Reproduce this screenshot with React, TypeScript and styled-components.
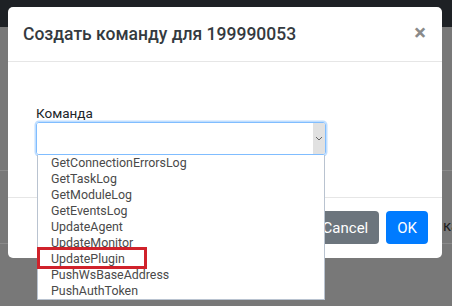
import React from 'react';
import styled, { createGlobalStyle } from 'styled-components';

const GlobalStyle = createGlobalStyle`
  html, body {
    margin: 0;
    padding: 0;
    width: 452px;
    height: 306px;
    overflow: hidden;
    background: #787878;
    font-family: Roboto, "Liberation Sans", sans-serif;
  }
`;

const Page = styled.div`
  position: relative;
  width: 452px;
  height: 306px;
  overflow: hidden;
  background: #787878;
`;

const TopBar = styled.div`
  height: 27px;
  background: #1e2125;
`;

const Table = styled.div`
  display: flex;
  flex-direction: column;
`;

const TableRow = styled.div<{ $height: number }>`
  height: ${(p) => p.$height}px;
  box-sizing: border-box;
  border-bottom: 1px solid #8a8a8a;
  padding: 46px 0 0 443px;
  white-space: nowrap;
  font-size: 15px;
  line-height: 18px;
  color: #1c1c1c;
`;

const Modal = styled.div`
  position: absolute;
  top: 7px;
  left: 8px;
  width: 434px;
  background: #fff;
  border-radius: 5px;
  display: flex;
  flex-direction: column;
`;

const Header = styled.div`
  display: flex;
  align-items: center;
  justify-content: space-between;
  padding: 15px 16px 15px 15px;
  border-bottom: 1px solid #e6e6e6;
`;

const Title = styled.h5`
  margin: 0;
  font-size: 17.5px;
  line-height: 24px;
  font-weight: 500;
  color: #343a40;
`;

const Close = styled.span`
  font-size: 22px;
  line-height: 20px;
  font-weight: 700;
  color: #8a8a8a;
  margin-top: -2px;
`;

const Body = styled.div`
  padding: 42px 116px 42px 28px;
`;

const Label = styled.label`
  display: block;
  font-size: 13.5px;
  line-height: 18px;
  color: #212529;
`;

const SelectWrap = styled.div`
  position: relative;
`;

const SelectBox = styled.div`
  display: flex;
  height: 33px;
  box-sizing: border-box;
  border: 1px solid #80bdff;
  border-radius: 3px;
  box-shadow: 0 0 0 1.5px rgba(0, 123, 255, 0.25);
  overflow: hidden;
`;

const SelectValue = styled.div`
  flex: 1;
  background: #fff;
`;

const ArrowArea = styled.div`
  width: 12px;
  background: #e1e1e1;
  display: flex;
  align-items: center;
  justify-content: center;
`;

const DropList = styled.ul`
  position: absolute;
  top: 33px;
  left: 1px;
  right: 1px;
  margin: 0;
  padding: 0;
  list-style: none;
  background: #fff;
  border: 1px solid #b9c3d0;
  border-top: none;
  z-index: 2;
`;

const Option = styled.li`
  position: relative;
  height: 16px;
  line-height: 16px;
  padding-left: 13px;
  font-size: 12.4px;
  color: #4a4a4a;
  white-space: nowrap;
`;

const Marker = styled.span`
  position: absolute;
  left: -1px;
  top: -4px;
  width: 110px;
  height: 22px;
  box-sizing: border-box;
  border: 3px solid #d0222b;
`;

const Footer = styled.div`
  display: flex;
  justify-content: flex-end;
  gap: 7px;
  padding: 13px 14px 14px;
  border-top: 1px solid #e6e6e6;
`;

const Button = styled.button<{ $variant: 'secondary' | 'primary' }>`
  height: 33px;
  padding: 0 11px;
  border: none;
  border-radius: 4px;
  font-family: Roboto, "Liberation Sans", sans-serif;
  font-size: 15px;
  color: #fff;
  background: ${(p) => (p.$variant === 'primary' ? '#007bff' : '#6c757d')};
`;

const commands = [
  'GetConnectionErrorsLog',
  'GetTaskLog',
  'GetModuleLog',
  'GetEventsLog',
  'UpdateAgent',
  'UpdateMonitor',
  'UpdatePlugin',
  'PushWsBaseAddress',
  'PushAuthToken',
];

export default function App() {
  return (
    <Page>
      <GlobalStyle />
      <TopBar />
      <Table>
        <TableRow $height={144} />
        <TableRow $height={73}>ка</TableRow>
      </Table>

      <Modal>
        <Header>
          <Title>Создать команду для 199990053</Title>
          <Close>×</Close>
        </Header>
        <Body>
          <Label>Команда</Label>
          <SelectWrap>
            <SelectBox>
              <SelectValue />
              <ArrowArea>
                <svg width="8" height="5" viewBox="0 0 8 5">
                  <path d="M1 1 L4 4 L7 1" fill="none" stroke="#666" strokeWidth="1" />
                </svg>
              </ArrowArea>
            </SelectBox>
            <DropList>
              {commands.map((c) => (
                <Option key={c}>
                  {c === 'UpdatePlugin' && <Marker />}
                  {c}
                </Option>
              ))}
            </DropList>
          </SelectWrap>
        </Body>
        <Footer>
          <Button $variant="secondary">Cancel</Button>
          <Button $variant="primary">OK</Button>
        </Footer>
      </Modal>
    </Page>
  );
}
